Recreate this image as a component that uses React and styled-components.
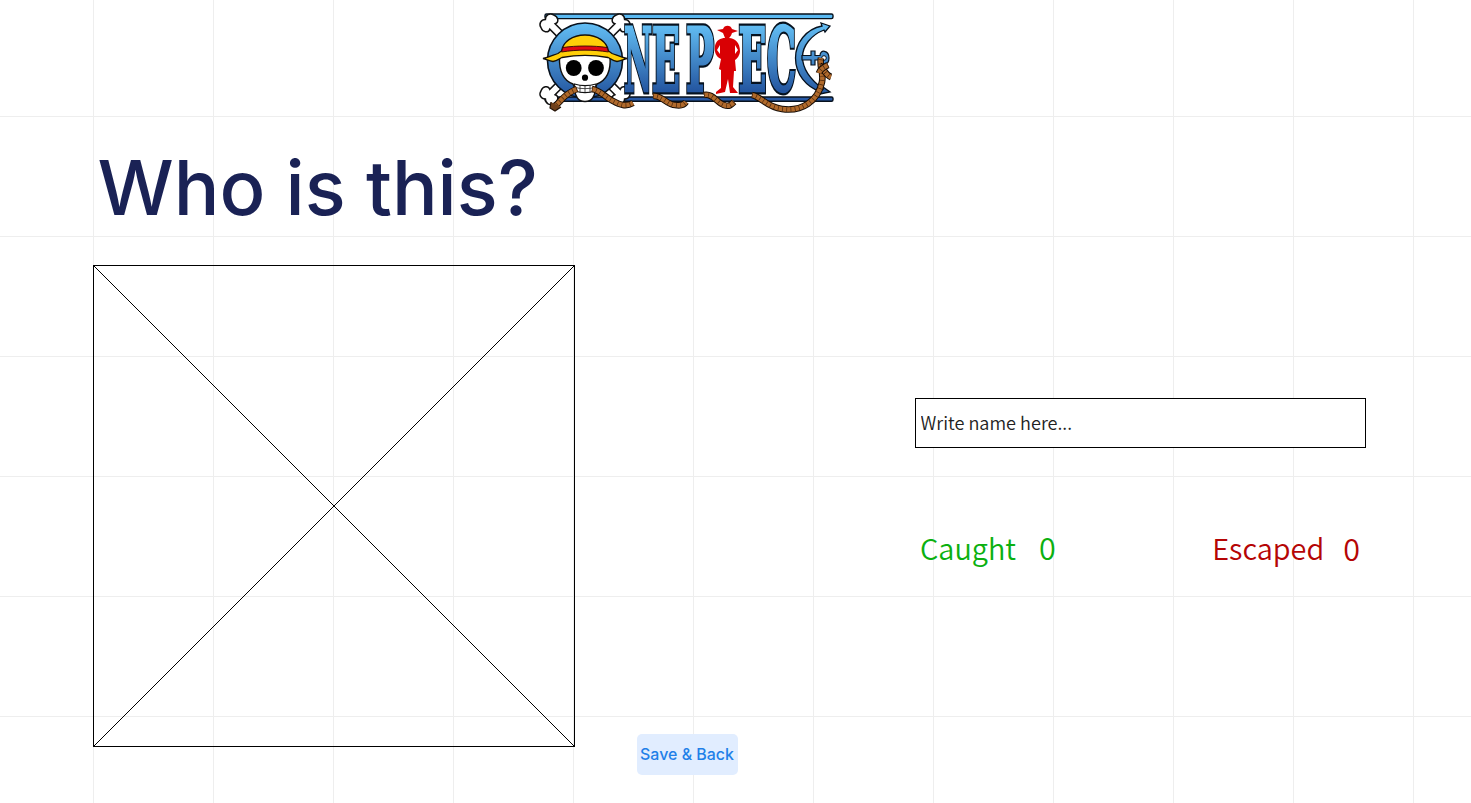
import React from 'react';
import styled, { createGlobalStyle } from 'styled-components';

const GlobalStyle = createGlobalStyle`
  * { box-sizing: border-box; }
  body { margin: 0; background: #fff; overflow: hidden; }
`;

const Page = styled.div`
  display: flex;
  flex-direction: column;
  width: 1471px;
  height: 803px;
  background-color: #fff;
  background-image:
    linear-gradient(to right, #eeeeee 1px, transparent 1px),
    linear-gradient(to bottom, #eeeeee 1px, transparent 1px);
  background-size: 120px 120px;
  background-position: 93px 0, 0 116px;
`;

const Header = styled.header`
  height: 120px;
  padding: 5px 0 0 530px;
`;

const LogoArt = styled.svg`
  display: block;
  width: 310px;
  height: 115px;
`;

const LogoLetter = styled.text`
  font-family: 'DejaVu Serif', serif;
  font-weight: 700;
  font-size: 89px;
  fill: url(#letterBlue);
  stroke: ${(p) => (p.$outline ? '#06121f' : 'url(#letterBlue)')};
  stroke-width: ${(p) => (p.$outline ? 7 : 2.5)}px;
  stroke-linejoin: miter;
  paint-order: stroke;
`;

const Main = styled.main`
  display: flex;
  flex: 1;
  padding-left: 93px;
`;

const Portrait = styled.section`
  width: 482px;
`;

const Title = styled.h1`
  height: 145px;
  margin: 0;
  padding: 21px 0 0 4.5px;
  font: 450 76px/92px Inter, sans-serif;
  color: #1a2255;
  white-space: nowrap;
`;

const Placeholder = styled.svg`
  display: block;
  width: 482px;
  height: 482px;
  border: 1px solid #000;
`;

const SaveButton = styled.button`
  align-self: flex-end;
  width: 101px;
  height: 41px;
  margin: 0 0 28px 62px;
  padding: 0 1px 0 0;
  border: 0;
  border-radius: 5px;
  background: #e1edff;
  color: #1f80e8;
  font: 450 15.95px/41px Inter, sans-serif;
  white-space: nowrap;
`;

const Panel = styled.section`
  width: 451px;
  margin-left: 177px;
  padding-top: 278px;
`;

const NameInput = styled.input`
  display: block;
  width: 451px;
  height: 50px;
  padding: 0 5px 2px 4.5px;
  border: 1px solid #000;
  border-radius: 0;
  background: #fff;
  font: 350 18.1px 'Noto Sans CJK JP', sans-serif;
  color: #222;
  &::placeholder { color: #222; opacity: 1; }
`;

const Scores = styled.div`
  display: flex;
  justify-content: space-between;
  margin-top: 77px;
  padding: 0 6px 0 5px;
`;

const Score = styled.div`
  display: flex;
  gap: ${(p) => p.$gap}px;
  color: ${(p) => p.$color};
  font: 350 28.9px/44px 'Noto Sans CJK JP', sans-serif;
`;

const Count = styled.span`
  padding-top: ${(p) => p.$drop || 0}px;
  font-size: 30.5px;
`;

const letters = [
  { char: 'N', x: 624, width: 28, advance: 81 },
  { char: 'E', x: 652, width: 28, advance: 68 },
  { char: 'P', x: 686, width: 28, advance: 67 },
  { char: 'E', x: 738.5, width: 28, advance: 68 },
  { char: 'C', x: 767, width: 29, advance: 71 },
];

function Bone({ x, y, angle }) {
  return (
    <g transform={`translate(${x} ${y}) rotate(${angle})`}>
      <path
        d="M26-3.800H7C9-8 4-11 0-9C-5-8-6-3-3 0C-6 3-5 8 0 9C4 11 9 8 7 3.800H26Z"
        fill="#fff"
        stroke="#111"
        strokeWidth="1.5"
      />
    </g>
  );
}

function Rope({ d }) {
  return (
    <g fill="none">
      <path d={d} stroke="#160c05" strokeWidth="6.6" />
      <path d={d} stroke="#b06a2c" strokeWidth="4.6" />
      <path d={d} stroke="#4b270c" strokeWidth="4.6" strokeDasharray="0.7 3.5" />
    </g>
  );
}

function Logo() {
  return (
    <LogoArt viewBox="530 5 310 115" role="img" aria-label="One Piece">
      <defs>
        <linearGradient id="letterBlue" gradientUnits="userSpaceOnUse" x1="0" y1="-67" x2="0" y2="0">
          <stop offset="0" stopColor="#62bdf3" />
          <stop offset="1" stopColor="#2456a0" />
        </linearGradient>
        <linearGradient id="blue" gradientUnits="userSpaceOnUse" x1="0" y1="24" x2="0" y2="96">
          <stop offset="0" stopColor="#62bdf3" />
          <stop offset="1" stopColor="#2456a0" />
        </linearGradient>
      </defs>
      <rect x="552" y="16" width="280" height="83" fill="#fff" />
      <rect x="545" y="14" width="288" height="4.6" rx="1.5" fill="#5ab9f2" stroke="#07111d" strokeWidth="1.4" />
      <rect x="545" y="97" width="288" height="4.2" rx="1.5" fill="#2758a5" stroke="#07111d" strokeWidth="1.4" />
      <Bone x={547.5} y={21.5} angle={45} />
      <Bone x={622.5} y={21.5} angle={135} />
      <Bone x={547.5} y={97} angle={-45} />
      <Bone x={622.5} y={97} angle={-135} />
      {letters.map((l) => (
        <g key={l.x} transform={`translate(${l.x} 91) scale(${l.width / l.advance} .98)`}>
          <LogoLetter $outline aria-hidden="true">{l.char}</LogoLetter>
          <LogoLetter>{l.char}</LogoLetter>
        </g>
      ))}
      <circle cx="585" cy="60.500" r="37.500" fill="url(#blue)" stroke="#07111d" strokeWidth="1.6" />
      <path
        d="M559.500 57C559 70 562 80 573 84L575 89H595L597 84C607 80 611 70 610 57C594 53 576 53 559.500 57Z"
        fill="#fff"
        stroke="#111"
        strokeWidth="1.4"
      />
      <path
        d="M561.500 51C563 42 572 35 585 35C598 35 607 42 608.500 51L612 53.500C619 56 621 57 627 58.500C623 59.500 621 61 617 61.500C613 61 611 59 608 57.500C594 55 576 55 562 57.500C559 59 557 61 553 61.500C549 61 547 59.500 543 58.500C549 57 551 56 558 53.500Z"
        fill="#ffcf08"
        stroke="#15100a"
        strokeWidth="1.3"
      />
      <path d="M563 47.500C576 45.500 594 45.500 607 47.500L608.500 52C593 49.500 577 49.500 561.500 52Z" fill="#df0812" stroke="#310806" strokeWidth=".9" />
      <ellipse cx="573.700" cy="68" rx="7.900" ry="8" />
      <ellipse cx="596" cy="68" rx="7.900" ry="8" />
      <circle cx="585" cy="77.700" r="3.1" />
      <path d="M575 90C575 96 578 101.500 585 101.500C592 101.500 595 96 595 90C589 93 581 93 575 90Z" fill="#fff" stroke="#111" strokeWidth="1.3" />
      <path d="M574.500 84C581 86 589 86 596 84L595 91C589 93 581 93 575 91Z" fill="#fff" stroke="#111" strokeWidth="1.1" />
      <path d="M575 87.500C581 89 589 89 595 87.500M580 85V92M585 85.500V92.500M590 85V92" fill="none" stroke="#222" strokeWidth=".8" />
      <Rope d="M577 89C569 92 566 95 562 99C559 103 557 103 554 108" />
      <path d="M551 102L550 108L555 111L561 107" fill="#70401b" stroke="#241307" strokeWidth="1.2" />
      <Rope d="M592 89C600 90 606 98 613 101C620 105 626 107 633 103" />
      <Rope d="M653 96C662 95 667 105 675 105C680 106 684 105 686 102" />
      <Rope d="M704 95C713 93 717 103 724 105C729 107 731 105 734 102" />
      <path
        fill="#d90004"
        d="M717 30L723 29C724 24.500 731 24.500 732 29L738 31L732 33C731 36 730 37 729 38C735 38 740 43 740 51C740 55 737 59 735 60L736 71H734L733 87L738 93H730L728 79L725 92L716 94V92L721 88V70L719 69L721 59C716 57 714 52 715 46C716 40 721 38 725 38L723 33Z"
      />
      <path d="M720 45L717 50L720 54ZM735 45L738 50L735 54Z" fill="#fff" />
      <path
        d="M830 26L821 23L822 26C806 29 795.500 43 795.500 58C795.500 74 806 87 821 92L820 94L830 92L823 87V89C811 80 802.500 69 802.500 57C802.500 46 811 35 824 30L825 32Z"
        fill="url(#blue)"
        stroke="#07111d"
        strokeWidth="1.3"
      />
      <path
        d="M802 55.500H811V51H815V55.500H820C820 49 829 50 829 58C829 66 820 66 820 60H815V65H811V60H802Z"
        fill="url(#blue)"
        stroke="#07111d"
        strokeWidth="1.2"
      />
      <circle cx="824" cy="58" r="2.300" fill="#fff" stroke="#07111d" />
      <Rope d="M752 95C762 97 766 107 782 109C802 112 818 101 822 82C824 72 819 67 821 58" />
      <Rope d="M820 66C823 67 825 75 831 77" />
      <Rope d="M828 65C824 67 820 69 819 73" />
    </LogoArt>
  );
}

export default function App() {
  return (
    <Page>
      <GlobalStyle />
      <Header>
        <Logo />
      </Header>
      <Main>
        <Portrait>
          <Title>Who is this?</Title>
          <Placeholder viewBox="0 0 480 480" shapeRendering="crispEdges" stroke="#000">
            <path d="M0 0L480 480M480 0L0 480" />
          </Placeholder>
        </Portrait>
        <SaveButton>Save &amp; Back</SaveButton>
        <Panel>
          <NameInput placeholder="Write name here..." aria-label="Name" />
          <Scores>
            <Score $color="#0bb010" $gap={23}>
              <span>Caught</span>
              <Count>0</Count>
            </Score>
            <Score $color="#b50505" $gap={19}>
              <span>Escaped</span>
              <Count $drop={1}>0</Count>
            </Score>
          </Scores>
        </Panel>
      </Main>
    </Page>
  );
}
